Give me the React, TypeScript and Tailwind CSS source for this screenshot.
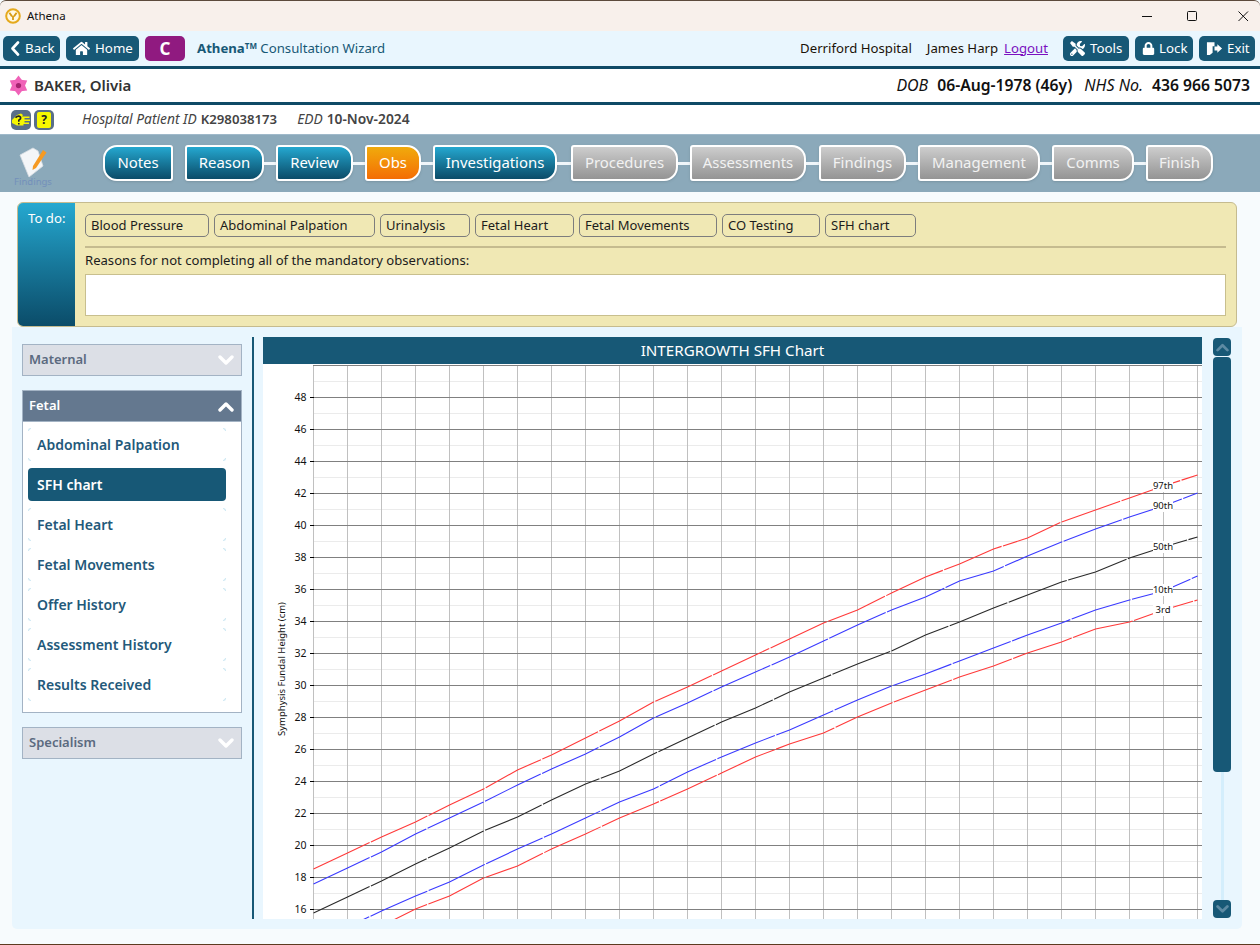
import React from "react";
import { FaHome, FaTools, FaLock } from "react-icons/fa";

const Chevron = ({ up, color = "#ffffff", w = 16, sw = 3.4 }: { up?: boolean; color?: string; w?: number; sw?: number }) => (
  <svg width={w} height={w * 0.75} viewBox="0 0 16 12" className="block">
    <polyline points={up ? "2,10 8,4 14,10" : "2,3 8,9 14,3"} fill="none" stroke={color} strokeWidth={sw} strokeLinecap="round" strokeLinejoin="round" />
  </svg>
);

const Corners = () => (
  <>
    <span className="absolute left-0 top-0 w-[3px] h-[3px] border-l border-t border-[#cfe8f3] rounded-tl-[3px]" />
    <span className="absolute right-0 top-0 w-[3px] h-[3px] border-r border-t border-[#cfe8f3] rounded-tr-[3px]" />
    <span className="absolute left-0 bottom-0 w-[3px] h-[3px] border-l border-b border-[#cfe8f3] rounded-bl-[3px]" />
    <span className="absolute right-0 bottom-0 w-[3px] h-[3px] border-r border-b border-[#cfe8f3] rounded-br-[3px]" />
  </>
);

const TopBtn = ({ cls, children }: { cls: string; children: React.ReactNode }) => (
  <div className={`h-[25px] rounded-[5px] bg-[#175876] text-white text-[13.3px] flex items-center ${cls}`}>{children}</div>
);

const steps = [
  { t: "Notes", w: "w-[70px]", k: "t", r: "rounded-l-[14px] rounded-r-[3px]" },
  { t: "Reason", w: "w-[79px]", k: "t", r: "rounded-l-[3px] rounded-r-[14px]", gap: "none" },
  { t: "Review", w: "w-[77px]", k: "t", r: "rounded-l-[3px] rounded-r-[14px]" },
  { t: "Obs", w: "w-[56px]", k: "o", r: "rounded-l-[3px] rounded-r-[14px]" },
  { t: "Investigations", w: "w-[124px]", k: "t", r: "rounded-l-[3px] rounded-r-[14px]" },
  { t: "Procedures", w: "w-[107px]", k: "g", r: "rounded-l-[3px] rounded-r-[14px]", c: "w-[14px]" },
  { t: "Assessments", w: "w-[116px]", k: "g", r: "rounded-l-[3px] rounded-r-[14px]" },
  { t: "Findings", w: "w-[87px]", k: "g", r: "rounded-l-[3px] rounded-r-[14px]", c: "w-[13px]" },
  { t: "Management", w: "w-[122px]", k: "g", r: "rounded-l-[3px] rounded-r-[14px]" },
  { t: "Comms", w: "w-[82px]", k: "g", r: "rounded-l-[3px] rounded-r-[14px]" },
  { t: "Finish", w: "w-[67px]", k: "g", r: "rounded-l-[3px] rounded-r-[14px]" },
];

const chips = [
  ["Blood Pressure", "w-[124px]"],
  ["Abdominal Palpation", "w-[161px]"],
  ["Urinalysis", "w-[90px]"],
  ["Fetal Heart", "w-[99px]"],
  ["Fetal Movements", "w-[138px]"],
  ["CO Testing", "w-[98px]"],
  ["SFH chart", "w-[91px]"],
];

const items = ["Abdominal Palpation", "SFH chart", "Fetal Heart", "Fetal Movements", "Offer History", "Assessment History", "Results Received"];

const curves: { c: string; p: number[] }[] = [
  { c: "#ff3a3a", p: [869,853,837,822,805,789,770,755,738,721,702,687,671,655,639,623,610,593,577,564,549,538,522,510,498,486,475] },
  { c: "#3a3aff", p: [884,868,852,834,818,802,785,769,754,737,718,703,687,672,657,641,625,610,597,581,571,556,542,529,517,506,493] },
  { c: "#2a2a2a", p: [913,897,881,864,848,831,817,800,784,771,754,738,722,708,692,678,664,651,635,622,608,595,582,572,558,547,537] },
  { c: "#3a3aff", p: [944,927,911,896,882,865,849,834,818,802,789,772,757,743,730,715,700,686,674,661,648,635,623,610,600,591,576] },
  { c: "#ff3a3a", p: [958,942,926,909,896,878,866,849,834,818,804,789,773,757,744,733,717,703,690,677,666,653,642,629,622,610,600] },
];

const labels: [string, number][] = [["97th", 486], ["90th", 506], ["50th", 547], ["10th", 590], ["3rd", 610]];

const OX = 263;
const OY = 364;

const Chart = () => {
  const vs = Array.from({ length: 27 }, (_, k) => 313 + 34 * k);
  const majors = Array.from({ length: 17 }, (_, i) => 48 - i * 2);
  const minors = Array.from({ length: 17 }, (_, i) => 381 + i * 32);
  return (
    <svg width={939} height={555} viewBox="0 0 939 555" className="block bg-white">
      {minors.map((y) => (
        <line key={y} x1={313 - OX} x2={939} y1={y - OY + 0.5} y2={y - OY + 0.5} stroke="#ebebeb" />
      ))}
      {vs.map((x) => (
        <line key={x} x1={x - OX + 0.5} x2={x - OX + 0.5} y1={1} y2={555} stroke="#c0c0c0" />
      ))}
      <line x1={313 - OX} x2={939} y1={1.5} y2={1.5} stroke="#808080" />
      {majors.map((v) => {
        const y = 397 + (48 - v) * 16 - OY + 0.5;
        return (
          <g key={v}>
            <line x1={313 - OX} x2={939} y1={y} y2={y} stroke="#808080" />
            <line x1={310 - OX} x2={314 - OX} y1={y} y2={y} stroke="#000000" />
            <text x={306.5 - OX} y={y + 3.5} textAnchor="end" fontSize={10.5} fill="#111111" fontFamily="Noto Sans, sans-serif">{v}</text>
          </g>
        );
      })}
      {curves.map((c, i) => (
        <polyline key={i} fill="none" stroke={c.c} strokeWidth={1.1} strokeDasharray="62 1.5"
          points={c.p.map((y, k) => `${313 + 34 * k - OX + 0.5},${y - OY}`).join(" ")} />
      ))}
      {labels.map(([t, y]) => (
        <g key={t}>
          <rect x={1163 - 10 - OX} y={y - 6 - OY} width={20} height={12} fill="#ffffff" />
          <text x={1163 - OX} y={y + 3 - OY} textAnchor="middle" fontSize={9.5} fill="#111111" fontFamily="Noto Sans, sans-serif">{t}</text>
        </g>
      ))}
      <text transform={`translate(${285 - OX},${669 - OY}) rotate(-90)`} textAnchor="middle" fontSize={9.5} fill="#111111" fontFamily="Noto Sans, sans-serif">Symphysis Fundal Height (cm)</text>
    </svg>
  );
};

const HeadRow = ({ t, open }: { t: string; open?: boolean }) => (
  <div className={`h-[32px] border border-[#a3b3c4] flex items-center justify-between pl-[6px] pr-[7px] text-[13px] font-semibold ${open ? "bg-[#64788f] text-white" : "bg-[#dcdfe6] text-[#5b6a7f]"}`}>
    <span>{t}</span>
    <Chevron up={open} />
  </div>
);

export default function App() {
  return (
    <div className="w-full h-[945px] overflow-hidden flex flex-col bg-[#f7fbfd] font-['Noto_Sans',sans-serif] text-black">
      {/* title bar */}
      <div className="h-[31px] shrink-0 bg-[#f8f0eb] border-t border-[#5c4a3c] flex items-center pl-[5px] pr-[11px] rounded-t-[6px]">
        <svg width="16" height="16" viewBox="0 0 16 16" className="block">
          <circle cx="8" cy="8" r="6.8" fill="#fff8e2" stroke="#e5a91c" strokeWidth="2" />
          <path d="M4.4 4.8 L7 8.4 M11.6 4.8 L9 8.4 M8 8 V12" stroke="#d79a12" strokeWidth="1.8" fill="none" />
        </svg>
        <span className="ml-[6px] text-[11.5px] text-[#111]">Athena</span>
        <div className="ml-auto flex items-center">
          <svg width="11" height="11" viewBox="0 0 11 11" className="block"><line x1="0" x2="10" y1="5.5" y2="5.5" stroke="#111" /></svg>
          <svg width="11" height="11" viewBox="0 0 11 11" className="block ml-[34px]"><rect x="0.5" y="0.5" width="9" height="9" rx="1" fill="none" stroke="#111" /></svg>
          <svg width="11" height="11" viewBox="0 0 11 11" className="block ml-[40px]"><path d="M0.5 0.5 L10 10 M10 0.5 L0.5 10" stroke="#111" fill="none" /></svg>
        </div>
      </div>

      {/* toolbar */}
      <div className="h-[35px] shrink-0 bg-[#e9f6fe] flex items-center pl-[3px] pr-[5px]">
        <TopBtn cls="w-[57px] pl-[7px]">
          <svg width="10" height="15" viewBox="0 0 10 15" className="block shrink-0"><polyline points="8,1.5 2.5,7.5 8,13.5" fill="none" stroke="#ffffff" strokeWidth="2.6" strokeLinecap="round" strokeLinejoin="round" /></svg>
          <span className="ml-[5px]">Back</span>
        </TopBtn>
        <TopBtn cls="w-[73px] ml-[6px] pl-[7px]"><FaHome className="text-[17px]" /><span className="ml-[5px]">Home</span></TopBtn>
        <div className="w-[40px] h-[25px] ml-[6px] rounded-[5px] bg-[#901a80] text-white text-[17px] font-bold flex items-center justify-center">C</div>
        <div className="ml-[12px] text-[13.2px] text-[#175876]">
          <span className="font-bold">Athena</span><span className="font-bold text-[8px] align-[4px]">TM</span> Consultation Wizard
        </div>
        <div className="ml-auto flex items-center text-[13.2px] text-[#1b1208]">
          <span>Derriford Hospital</span>
          <span className="ml-[15px]">James Harp</span>
          <span className="ml-[6px] text-[#7a10c0] underline">Logout</span>
          <TopBtn cls="w-[66px] ml-[15px] pl-[7px]"><FaTools className="text-[15px]" /><span className="ml-[5px]">Tools</span></TopBtn>
          <TopBtn cls="w-[58px] ml-[6px] pl-[7px]"><FaLock className="text-[13px]" /><span className="ml-[4px]">Lock</span></TopBtn>
          <TopBtn cls="w-[56px] ml-[6px] pl-[7px]">
            <svg width="17" height="15" viewBox="0 0 18 15" className="block shrink-0">
              <path d="M1 1 H9 V5 H7 V12 L4 14.5 H1 Z" fill="#ffffff" />
              <path d="M9 5.5 H12 V3 L17 7.5 L12 12 V9.5 H9 Z" fill="#ffffff" />
            </svg>
            <span className="ml-[4px]">Exit</span>
          </TopBtn>
        </div>
      </div>

      {/* patient */}
      <div className="h-[39px] shrink-0 bg-white border-y-[3px] border-[#0f4a66] flex items-center pl-[8px] pr-[10px]">
        <svg width="21" height="21" viewBox="0 0 24 24" className="block">
          {[0, 60, 120, 180, 240, 300].map((a) => (
            <path key={a} d="M12 12 L7.5 6.5 L12 0.5 L16.5 6.5 Z" fill="#f062b8" transform={`rotate(${a} 12 12)`} />
          ))}
          <circle cx="12" cy="12" r="3" fill="#a3246f" />
        </svg>
        <span className="ml-[5px] text-[15px] font-semibold text-[#333]">BAKER, Olivia</span>
        <div className="ml-auto text-[15.7px] text-[#111]">
          <span className="italic text-[16px]">DOB</span>
          <span className="ml-[9px] font-semibold">06-Aug-1978 (46y)</span>
          <span className="ml-[12px] italic text-[16px]">NHS No.</span>
          <span className="ml-[9px] font-semibold">436 966 5073</span>
        </div>
      </div>

      {/* info */}
      <div className="h-[30px] shrink-0 bg-white border-b border-[#9fb9ca] flex items-center pl-[11px] text-[13.8px] text-[#444]">
        <div className="relative w-[20px] h-[20px] rounded-[5px] bg-[#5a6f88] flex items-center">
          <svg width="20" height="20" viewBox="0 0 20 20" className="block">
            <path d="M1 10 L6 5 L10 3.5 L12 5 L11 6.5 H18.5 V8 H13.5 V9.5 H19 V11 H13.5 V12.5 H18 V14 H12.5 V15.5 H6 L1 13 Z" fill="#f7f700" />
            <path d="M4.5 7.6 Q7.5 5 9.5 7 Q10.2 9 7.8 10.2 V11.8 M7.8 13 V14.4" fill="none" stroke="#222" strokeWidth="1.6" />
          </svg>
        </div>
        <div className="w-[20px] h-[20px] ml-[3px] rounded-[5px] bg-[#5a6f88] flex items-center justify-center">
          <div className="w-[14px] h-[16px] rounded-[2px] bg-[#f7f700] text-[#222] text-[12px] font-bold leading-[16px] text-center">?</div>
        </div>
        <span className="ml-[28px] italic">Hospital Patient ID</span>
        <span className="ml-[4px] font-semibold text-[13.2px]">K298038173</span>
        <span className="ml-[20px] italic">EDD</span>
        <span className="ml-[4px] font-semibold text-[13.8px]">10-Nov-2024</span>
      </div>

      {/* wizard */}
      <div className="h-[57px] shrink-0 bg-[#8ba9ba] flex pl-[16px]">
        <div className="w-[34px] flex flex-col items-center pt-[11px]">
          <svg width="30" height="32" viewBox="0 0 30 32" className="block">
            <path d="M2 9 L15 2 L20 5 L25 20 L11 31 Z" fill="#f4f6f8" stroke="#d8dde2" strokeWidth="0.8" />
            <path d="M15 20 L25 4 L28.5 6.5 L18 22 L14.5 24 Z" fill="#f59a23" />
          </svg>
          <span className="text-[9.5px] leading-[10px] text-[#7390bb] -mt-[1px]">Findings</span>
        </div>
        <div className="ml-[53px] mt-[10px] flex items-start">
          {steps.map((s, i) => (
            <React.Fragment key={s.t}>
              {i > 0 && <div className={`${s.c ?? "w-[12px]"} h-[3px] mt-[17px] ${s.gap === "none" ? "" : "bg-[#f0f6fa]"}`} />}
              <div className={`${s.w} ${s.r} h-[36px] border-[2.5px] border-white shadow-sm flex items-center justify-center text-[14.9px] ${s.k === "t" ? "bg-gradient-to-b from-[#25a8d0] to-[#0b4c69] text-white" : s.k === "o" ? "bg-gradient-to-b from-[#f0aa0c] to-[#f36c05] text-white" : "bg-gradient-to-b from-[#cdcdcd] to-[#949494] text-[#f2f2f2]"}`}>
                <span className="-mt-[2px]">{s.t}</span>
              </div>
            </React.Fragment>
          ))}
        </div>
      </div>

      {/* body */}
      <div className="flex-1 min-h-0 flex flex-col pt-[10px] pb-[15px]">
        <div className="ml-[17px] mr-[23px] h-[125px] shrink-0 flex rounded-[6px] overflow-hidden border border-[#c5bb8f] bg-[#f0e8b4]">
          <div className="w-[57px] shrink-0 bg-gradient-to-b from-[#25a8d0] to-[#0b4c69] text-white text-[13.2px] pt-[6px] pl-[10px]">To do:</div>
          <div className="flex-1 pl-[10px] pr-[10px] pt-[11px]">
            <div className="flex gap-[5px]">
              {chips.map(([t, w]) => (
                <div key={t} className={`${w} h-[23px] rounded-[5px] border border-[#7d7d7d] pl-[5px] text-[13px] leading-[21px] text-[#1c1c1c]`}>{t}</div>
              ))}
            </div>
            <div className="h-[2px] bg-[#c5bb8f] mt-[9px]" />
            <div className="mt-[3px] text-[13.1px] leading-[19px] text-[#1c1c1c]">Reasons for not completing all of the mandatory observations:</div>
            <div className="h-[42px] mt-[4px] bg-white border border-[#c8bf8e]" />
          </div>
        </div>

        <div className="ml-[12px] mr-[18px] flex-1 min-h-0 flex bg-[#e9f6fe] rounded-b-[5px] py-[10px] pl-[10px]">
          <div className="w-[220px] shrink-0 pt-[7px] flex flex-col">
            <HeadRow t="Maternal" />
            <div className="mt-[14px]">
              <HeadRow t="Fetal" open />
              <div className="h-[291px] bg-white border-x border-b border-[#a3b3c4] px-[5px] pt-[6px] flex flex-col gap-[7px]">
                {items.map((t) => (
                  <div key={t} className={`relative h-[33px] w-[198px] pl-[9px] flex items-center text-[14px] font-semibold rounded-[4px] ${t === "SFH chart" ? "bg-[#175876] text-white" : "text-[#23597a]"}`}>
                    {t !== "SFH chart" && <Corners />}
                    {t}
                  </div>
                ))}
              </div>
            </div>
            <div className="mt-[14px]"><HeadRow t="Specialism" /></div>
          </div>
          <div className="w-[1.5px] ml-[10px] mr-[-0.5px] bg-[#175876] shrink-0" />
          <div className="w-[939px] ml-[10px] shrink-0 flex flex-col -mr-[1px]">
            <div className="h-[27px] bg-[#175876] text-white text-[15.2px] flex items-center justify-center"><span className="-mt-[1px]">INTERGROWTH SFH Chart</span></div>
            <Chart />
          </div>
          <div className="w-[18px] ml-[12px] shrink-0 flex flex-col items-center pt-[1px] pb-[1px]">
            <div className="w-[18px] h-[18px] rounded-[4px] bg-[#175876] flex items-center justify-center"><Chevron up color="#5d8aa3" w={13} sw={3.4} /></div>
            <div className="w-[18px] h-[415px] mt-[1px] rounded-[4px] bg-[#175876]" />
            <div className="w-[3px] flex-1 bg-[#d4eefc]" />
            <div className="w-[18px] h-[18px] rounded-[4px] bg-[#175876] flex items-center justify-center"><Chevron color="#5d8aa3" w={13} sw={3.4} /></div>
          </div>
        </div>
      </div>
      <div className="h-px shrink-0 bg-[#5c3a20]" />
    </div>
  );
}
